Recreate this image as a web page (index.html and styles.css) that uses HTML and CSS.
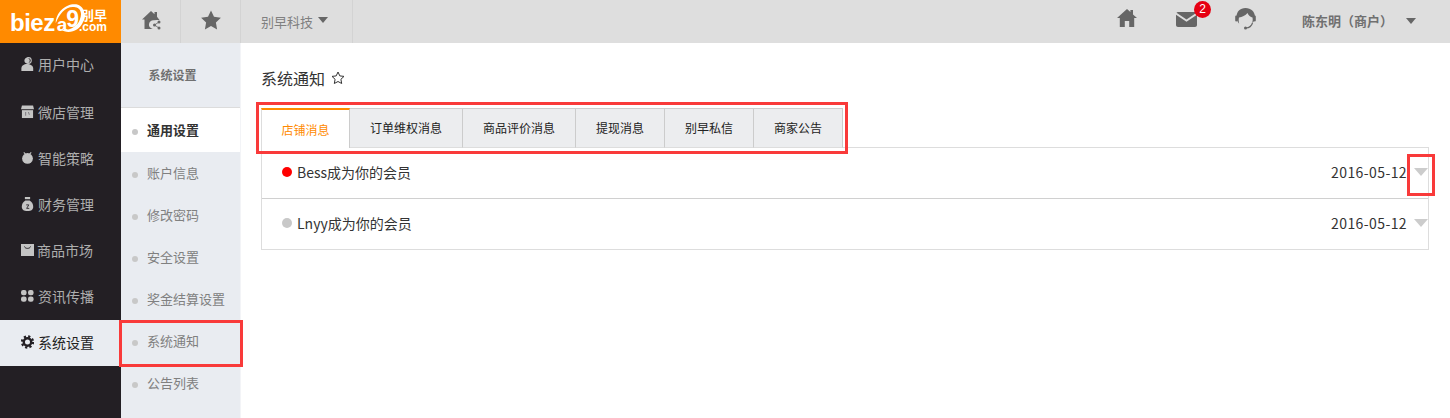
FILE: index.html
```html
<!DOCTYPE html>
<html lang="zh">
<head>
<meta charset="utf-8">
<title>系统通知</title>
<link rel="stylesheet" href="styles.css">
</head>
<body>
<header class="topbar">
  <a class="logo">
    <span class="logo-word">biez<span class="logo-ao">a<span class="logo-nine">9</span></span></span>
    <svg class="logo-swoosh" viewBox="0 0 36 36"><path d="M2 24C2 10 16 0 27 3c8 3 9 13 5 21-4 8-15 13-25 7 10 2 19-3 22-11 3-7 1-13-5-14C14 4 6 13 2 24z" fill="#fff"/></svg>
    <span class="logo-side"><span class="logo-cn">别早</span><span class="logo-com">.com</span></span>
  </a>
  <div class="top-cell top-icon">
    <svg class="ic-home-share" viewBox="0 0 20 20"><path d="M10 1 1 9.500h2.500V19h8.300a4 4 0 0 1 1-8.700l3.200-.4h2.500L16 6.700V2h-2.500v2.300z" fill="#666"/><circle cx="18" cy="12" r="1.500" fill="#666"/><circle cx="18" cy="18" r="1.500" fill="#666"/><circle cx="13.500" cy="15" r="1.500" fill="#666"/><path d="M13.500 15 18 12M13.500 15 18 18" stroke="#666" stroke-width=".8"/></svg>
  </div>
  <div class="top-cell top-icon">
    <svg class="ic-star" viewBox="0 0 20 20"><path d="m10 .5 3 6.300 6.900.9-5 4.800 1.200 6.900-6.100-3.300-6.100 3.300 1.200-6.900-5-4.800 6.900-.9z" fill="#666"/></svg>
  </div>
  <div class="top-cell top-company"><span>别早科技</span><i class="caret"></i></div>
  <div class="top-right">
    <svg class="ic-home" viewBox="0 0 20 18"><path d="M10 0 0 9h2.800v9h5v-6h4.400v6h5V9H20l-4-3.600V1h-2.600v2z" fill="#666"/></svg>
    <div class="mail">
      <svg class="ic-mail" viewBox="0 0 21 15"><path d="M2 0h17c.7 0 1.200.3 1.500.8L10.500 7.500.5.800C.8.300 1.300 0 2 0zM0 2.800 10.500 9.800 21 2.800V13c0 1.100-.9 2-2 2H2c-1.100 0-2-.9-2-2z" fill="#666"/></svg>
      <span class="badge">2</span>
    </div>
    <svg class="ic-head" viewBox="0 0 21 22"><path d="M10.500 0C5 0 1.500 3.800 1.500 9c0 2.500 1 5 2.700 6.700-.5-2-.7-4.300-.2-6.200C7 9 10.500 7.500 12.500 5c1 2.500 3 4 5 4.500.4 2 .2 4-.4 5.700C19.500 13.500 20 11 20 9c0-5.200-4-9-9.500-9z" fill="#666"/><path d="M1.200 8.500v4M19.800 8.500v4" stroke="#666" stroke-width="2" stroke-linecap="round"/><path d="M17.500 15c-1 3-3.500 4.800-6.500 5" stroke="#666" stroke-width="1.200" fill="none"/><circle cx="10.500" cy="20" r="1.500" fill="#666"/></svg>
    <div class="user"><span>陈东明（商户）</span><i class="caret caret-user"></i></div>
  </div>
</header>
<div class="body-row">
  <nav class="side">
    <a class="side-item first"><svg viewBox="0 0 14 16"><circle cx="8" cy="4" r="3.300" fill="none" stroke="#c4c4c4" stroke-width="1.200"/><circle cx="6.500" cy="4" r="3" fill="#c4c4c4"/><path d="M0 16v-3c0-3 3-5 6.500-5s7 2 7 5v3z" fill="#c4c4c4"/></svg>用户中心</a>
    <a class="side-item second"><svg viewBox="0 0 14 14"><path d="M1 0h12l1 4H0z" fill="#c4c4c4"/><path d="M1 5h12v8.500H1z" fill="#c4c4c4"/><path d="M5 7v4M8 7l1 3" stroke="#77747a"/></svg>微店管理</a>
    <a class="side-item"><svg viewBox="0 0 14 14"><circle cx="7" cy="7.500" r="5.800" fill="#c4c4c4"/><path d="m3 1 2 2M11 1 9 3" stroke="#c4c4c4" stroke-width="1.200"/></svg>智能策略</a>
    <a class="side-item"><svg viewBox="0 0 14 16"><path d="M4 0h6v2.500H4z" fill="#c4c4c4"/><path d="M4.500 4h5c2.500 1.500 4 4 4 7 0 3-2 5-6.500 5S.5 14 .5 11c0-3 1.500-5.500 4-7z" fill="#c4c4c4"/><path d="M5.500 9h3L6 13h3" stroke="#2a262b" fill="none"/></svg>财务管理</a>
    <a class="side-item market"><svg viewBox="0 0 13 12"><path d="M0 0h13v12H0z" fill="#c4c4c4"/><path d="M3.500 2.500c.5 2.500 5.500 2.500 6 0" stroke="#231f24" fill="none"/></svg>商品市场</a>
    <a class="side-item"><svg viewBox="0 0 13 12"><rect width="5.600" height="5.200" rx="2.200" fill="#c4c4c4"/><rect x="7" width="5.600" height="5.200" rx="2.200" fill="#c4c4c4"/><rect y="6.500" width="5.600" height="5.200" rx="2.200" fill="#c4c4c4"/><rect x="7" y="6.500" width="5.600" height="5.200" rx="2.200" fill="#c4c4c4"/></svg>资讯传播</a>
    <a class="side-item active"><svg viewBox="0 0 14 14"><circle cx="7" cy="7" r="6" fill="none" stroke="#231f24" stroke-width="2.400" stroke-dasharray="2.360 2.352"/><circle cx="7" cy="7" r="4" fill="none" stroke="#231f24" stroke-width="2.600"/></svg>系统设置</a>
  </nav>
  <aside class="sub">
    <div class="sub-head">系统设置</div>
    <a class="sub-item current">通用设置</a>
    <a class="sub-item">账户信息</a>
    <a class="sub-item">修改密码</a>
    <a class="sub-item">安全设置</a>
    <a class="sub-item">奖金结算设置</a>
    <a class="sub-item">系统通知</a>
    <a class="sub-item">公告列表</a>
  </aside>
  <main class="main">
    <h1 class="title">系统通知<svg class="title-star" viewBox="0 0 14 14"><path d="m7 1 1.800 3.900 4.200.5-3.100 2.900.8 4.200L7 10.500l-3.700 2 .8-4.200L1 5.400l4.200-.5z" fill="none" stroke="#333" stroke-width="1"/></svg></h1>
    <div class="tabs">
      <a class="tab on">店铺消息</a>
      <a class="tab">订单维权消息</a>
      <a class="tab">商品评价消息</a>
      <a class="tab">提现消息</a>
      <a class="tab">别早私信</a>
      <a class="tab">商家公告</a>
    </div>
    <div class="list">
      <div class="row row-a"><i class="dot unread"></i><span class="msg">Bess成为你的会员</span><span class="date">2016-05-12</span><i class="arrow"></i></div>
      <div class="row row-b"><i class="dot"></i><span class="msg">Lnyy成为你的会员</span><span class="date">2016-05-12</span><i class="arrow"></i></div>
    </div>
  </main>
</div>
<div class="mark mark-tabs"></div>
<div class="mark mark-arrow"></div>
<div class="mark mark-sub"></div>
</body>
</html>
```
FILE: styles.css
```css
* { box-sizing: border-box; }
html, body { margin: 0; height: 100%; }
body {
  position: relative;
  height: 418px;
  overflow: hidden;
  display: flex;
  flex-direction: column;
  background: #fff;
  font-family: "Noto Sans CJK SC", "Noto Sans", sans-serif;
  color: #333;
}
.topbar { display: flex; height: 43px; background: #dedede; flex: none; }
.logo {
  position: relative;
  width: 121px;
  background: #ff8a00;
  display: flex;
  align-items: center;
  padding-left: 10px;
  color: #fff;
}
.logo-word {
  font: bold 24px/1 "Liberation Sans", sans-serif;
  letter-spacing: -.5px;
  margin-top: 2px;
  width: 71px;
  white-space: nowrap;
}
.logo-ao { font-size: 19px; letter-spacing: -1px; margin-left: 2px; }
.logo-nine { display: inline-block; font-size: 23px; vertical-align: 4px; line-height: 16px; }
.logo-swoosh { position: absolute; left: 54px; top: 2px; width: 32px; height: 32px; }
.logo-side { display: flex; flex-direction: column; align-items: flex-end; width: 26px; line-height: 1; }
.logo-cn { font-size: 13px; line-height: 14px; font-weight: 700; margin-top: -3px; }
.logo-com { font: bold 12px/11px "Liberation Sans", sans-serif; }
.top-cell { display: flex; align-items: center; justify-content: center; border-right: 1px solid #d3d3d3; }
.top-icon { width: 60px; padding-bottom: 4px; }
.ic-home-share { width: 20px; height: 20px; }
.ic-star { width: 20px; height: 20px; }
.top-company {
  width: 112px;
  gap: 5px;
  padding-bottom: 1px;
  font-size: 13px;
  color: #808080;
  justify-content: flex-start;
  padding-left: 20px;
}
.caret {
  width: 0;
  height: 0;
  border-left: 5px solid transparent;
  border-right: 5px solid transparent;
  border-top: 6px solid #666;
  margin-top: -3px;
}
.top-right { margin-left: auto; display: flex; align-items: center; padding: 0 26px 8px 0; }
.ic-home { width: 20px; height: 18px; margin-right: 39px; }
.mail { position: relative; width: 21px; height: 15px; margin-right: 38px; margin-top: 3px; }
.ic-mail { display: block; width: 21px; height: 15px; }
.badge {
  position: absolute;
  left: 18px;
  top: -11px;
  width: 17px;
  height: 17px;
  border-radius: 50%;
  background: #e60012;
  color: #fff;
  font: 12px/17px "Liberation Sans", sans-serif;
  text-align: center;
}
.ic-head { width: 21px; height: 22px; margin-right: 46px; margin-top: 2px; }
.user {
  display: flex;
  align-items: center;
  gap: 13px;
  width: 122px;
  margin-top: 6px;
  font-size: 13px;
  font-weight: 700;
  color: #707070;
}
.caret-user { margin-top: 1px; margin-left: 0; border-top-color: #666; }

.body-row { display: flex; flex: 1; min-height: 0; }
.side { width: 121px; background: #231f24; flex: none; }
.side-item {
  display: flex;
  align-items: center;
  height: 46px;
  padding: 0 0 2px 21px;
  gap: 4px;
  font-size: 14px;
  color: #aeaeae;
}
.side-item svg { width: 13px; height: 14px; flex: none; }
.side-item.first { height: 45px; padding-bottom: 4px; }
.side-item.second { height: 48px; padding-bottom: 0; }
.side-item.market { gap: 3px; }
.side-item.active { background: #e9ecf1; color: #222; }
.sub { width: 120px; background: #e9ecf1; border-right: 1px solid #f3f4f7; flex: none; }
.sub-head {
  height: 65px;
  border-bottom: 1px solid #dcdcdc;
  display: flex;
  align-items: center;
  justify-content: center;
  font-size: 12px;
  font-weight: 700;
  color: #707070;
  padding: 0 16px 2px 0;
}
.sub-item {
  display: flex;
  align-items: center;
  height: 42px;
  padding: 0 0 2px 11px;
  gap: 9px;
  font-size: 13px;
  color: #808080;
}
.sub-item::before {
  content: "";
  width: 6px;
  height: 6px;
  margin-top: 6px;
  border-radius: 50%;
  background: #c8c8c8;
}
.sub-item.current { height: 44px; background: #fff; color: #333; font-weight: 700; }
.main { flex: 1; padding: 0 21px 0 20px; min-width: 0; }
.title {
  display: flex;
  align-items: center;
  margin: 0;
  height: 65px;
  padding-top: 5px;
  font-size: 16px;
  font-weight: 400;
  color: #333;
}
.title-star { width: 14px; height: 14px; margin-left: 6px; }
.tabs { display: flex; height: 40px; position: relative; z-index: 1; }
.tab {
  display: flex;
  align-items: center;
  justify-content: center;
  padding: 0 20px 1px;
  background: #ecedef;
  border-top: 1px solid #ccc;
  border-right: 1px solid #ccc;
  border-bottom: 1px solid #ddd;
  font-size: 12px;
  color: #222;
  white-space: nowrap;
}
.tab.on {
  background: #fff;
  color: #ff8a00;
  border-top: 2px solid #ff8a00;
  border-left: 1px solid #ddd;
  border-bottom: 0;
  padding: 0;
  width: 89px;
}
.list { border: 1px solid #ddd; height: 103px; margin-top: -1px; }
.row { display: flex; align-items: center; padding: 0 0 2px 20px; }
.row-a { height: 51px; border-bottom: 1px solid #d0d0d0; }
.row-b { height: 50px; }
.dot { width: 10px; height: 10px; border-radius: 50%; background: #c8c8c8; margin-right: 5px; flex: none; }
.dot.unread { background: #f00; }
.msg { font-size: 14px; color: #333; }
.date { margin-left: auto; font-size: 14px; letter-spacing: .4px; color: #333; }
.arrow {
  width: 0;
  height: 0;
  margin: 0 0 0 7px;
  border-left: 7px solid transparent;
  border-right: 7px solid transparent;
  border-top: 8px solid #ccc;
}
.mark { position: absolute; border: 3px solid #f93a3a; }
.mark-tabs { left: 256px; top: 102px; width: 592px; height: 52px; }
.mark-arrow { left: 1407px; top: 154px; width: 28px; height: 42px; }
.mark-sub { left: 119px; top: 320px; width: 124px; height: 47px; }
```
